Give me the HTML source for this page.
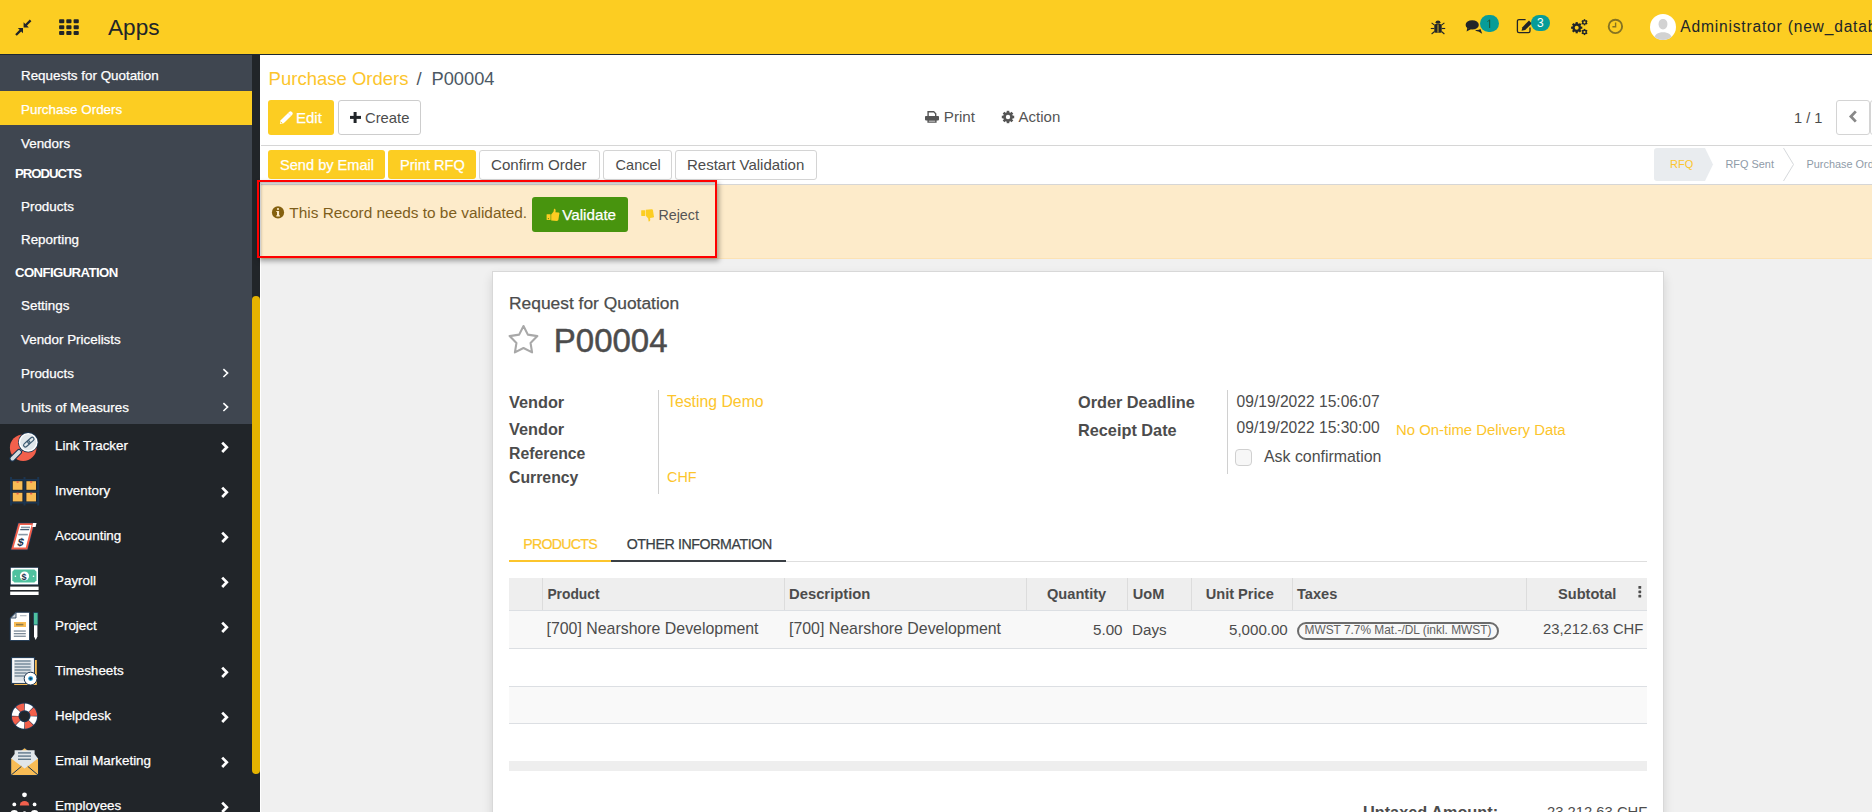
<!DOCTYPE html>
<html><head><meta charset="utf-8"><style>
html,body{margin:0;padding:0;width:1872px;height:812px;overflow:hidden;background:#F0F0F0}
body{position:relative;font-family:"Liberation Sans",sans-serif}
.t{position:absolute;line-height:1;white-space:nowrap;z-index:2}
.r{position:absolute}
svg{position:absolute;overflow:visible}
</style></head><body>
<div class="r" style="left:0px;top:0px;width:1872px;height:54px;background:#FCCD22"></div>
<div class="r" style="left:0px;top:54px;width:1872px;height:1px;background:#1d2833"></div>
<div class="r" style="left:0px;top:55px;width:252px;height:369px;background:#3F4650"></div>
<div class="r" style="left:0px;top:424px;width:252px;height:388px;background:#212529"></div>
<div class="r" style="left:252px;top:55px;width:8px;height:757px;background:#212529"></div>
<div class="r" style="left:252px;top:296px;width:8px;height:478px;background:#E5B300;border-radius:4px"></div>
<div class="r" style="left:260px;top:55px;width:1612px;height:757px;background:#F0F0F0"></div>
<div class="r" style="left:260px;top:55px;width:1612px;height:90px;background:#fff"></div>
<div class="r" style="left:260px;top:145px;width:1612px;height:1px;background:#D6D6D6"></div>
<div class="r" style="left:260px;top:146px;width:1612px;height:38px;background:#fff"></div>
<div class="r" style="left:260px;top:184px;width:1612px;height:1px;background:#D6D6D6"></div>
<div class="r" style="left:260px;top:185px;width:1612px;height:74px;background:#FDEBCA"></div>
<div class="r" style="left:260px;top:258px;width:1612px;height:1px;background:#FCE2B4"></div>
<div class="r" style="left:260px;top:55px;width:1px;height:757px;background:#fff"></div>
<div class="t" style="left:108px;top:16.87px;font-size:22.6px;color:#212529;font-weight:normal;">Apps</div>
<div class="t" style="left:1680.3px;top:19.39px;font-size:15.6px;color:#212529;font-weight:normal;letter-spacing:0.8px">Administrator (new_database)</div>
<div class="r" style="left:0px;top:91px;width:252px;height:34px;background:#FCCD22"></div>
<div class="t" style="left:21px;top:102.66px;font-size:13.4px;color:#fff;font-weight:normal;-webkit-text-stroke-width:0.25px;">Purchase Orders</div>
<div class="t" style="left:21px;top:68.66px;font-size:13.4px;color:#fff;font-weight:normal;-webkit-text-stroke-width:0.25px;">Requests for Quotation</div>
<div class="t" style="left:21px;top:136.66px;font-size:13.4px;color:#fff;font-weight:normal;-webkit-text-stroke-width:0.25px;">Vendors</div>
<div class="t" style="left:21px;top:199.66px;font-size:13.4px;color:#fff;font-weight:normal;-webkit-text-stroke-width:0.25px;">Products</div>
<div class="t" style="left:21px;top:232.66px;font-size:13.4px;color:#fff;font-weight:normal;-webkit-text-stroke-width:0.25px;">Reporting</div>
<div class="t" style="left:21px;top:298.66px;font-size:13.4px;color:#fff;font-weight:normal;-webkit-text-stroke-width:0.25px;">Settings</div>
<div class="t" style="left:21px;top:332.66px;font-size:13.4px;color:#fff;font-weight:normal;-webkit-text-stroke-width:0.25px;">Vendor Pricelists</div>
<div class="t" style="left:21px;top:366.66px;font-size:13.4px;color:#fff;font-weight:normal;-webkit-text-stroke-width:0.25px;">Products</div>
<div class="t" style="left:21px;top:400.66px;font-size:13.4px;color:#fff;font-weight:normal;-webkit-text-stroke-width:0.25px;">Units of Measures</div>
<div class="t" style="left:15px;top:166.83px;font-size:13.2px;color:#fff;font-weight:bold;letter-spacing:-1.0px">PRODUCTS</div>
<div class="t" style="left:15px;top:266.33px;font-size:13.2px;color:#fff;font-weight:bold;letter-spacing:-0.6px">CONFIGURATION</div>
<div class="t" style="left:55px;top:438.66px;font-size:13.4px;color:#fff;font-weight:normal;-webkit-text-stroke-width:0.25px;">Link Tracker</div>
<div class="t" style="left:55px;top:483.66px;font-size:13.4px;color:#fff;font-weight:normal;-webkit-text-stroke-width:0.25px;">Inventory</div>
<div class="t" style="left:55px;top:528.66px;font-size:13.4px;color:#fff;font-weight:normal;-webkit-text-stroke-width:0.25px;">Accounting</div>
<div class="t" style="left:55px;top:573.66px;font-size:13.4px;color:#fff;font-weight:normal;-webkit-text-stroke-width:0.25px;">Payroll</div>
<div class="t" style="left:55px;top:618.66px;font-size:13.4px;color:#fff;font-weight:normal;-webkit-text-stroke-width:0.25px;">Project</div>
<div class="t" style="left:55px;top:663.66px;font-size:13.4px;color:#fff;font-weight:normal;-webkit-text-stroke-width:0.25px;">Timesheets</div>
<div class="t" style="left:55px;top:708.66px;font-size:13.4px;color:#fff;font-weight:normal;-webkit-text-stroke-width:0.25px;">Helpdesk</div>
<div class="t" style="left:55px;top:753.66px;font-size:13.4px;color:#fff;font-weight:normal;-webkit-text-stroke-width:0.25px;">Email Marketing</div>
<div class="t" style="left:55px;top:798.66px;font-size:13.4px;color:#fff;font-weight:normal;-webkit-text-stroke-width:0.25px;">Employees</div>
<div class="t" style="left:268.6px;top:70.24px;font-size:18.5px;color:#FCC52C;font-weight:normal;">Purchase Orders</div>
<div class="t" style="left:416.5px;top:70.24px;font-size:18.5px;color:#4C5864;font-weight:normal;">/</div>
<div class="t" style="left:431.5px;top:70.41px;font-size:18.3px;color:#4C5864;font-weight:normal;">P00004</div>
<div class="r" style="left:268px;top:100px;width:66px;height:35px;background:#FCCD22;border-radius:3px"></div>
<div class="t" style="left:296px;top:110.30px;font-size:15px;color:#fff;font-weight:normal;-webkit-text-stroke-width:0.25px;">Edit</div>
<div class="r" style="left:338px;top:100px;width:83px;height:35px;background:#fff;border:1px solid #CDCDCD;border-radius:3px;box-sizing:border-box"></div>
<div class="t" style="left:365px;top:110.87px;font-size:14.8px;color:#4C4C4C;font-weight:normal;">Create</div>
<div class="t" style="left:943.8px;top:109.13px;font-size:15.2px;color:#555;font-weight:normal;">Print</div>
<div class="t" style="left:1018.6px;top:109.30px;font-size:15px;color:#555;font-weight:normal;">Action</div>
<div class="t" style="left:1794px;top:110.64px;font-size:14.6px;color:#4c4c4c;font-weight:normal;">1 / 1</div>
<div class="r" style="left:1836px;top:100px;width:34px;height:35px;background:#fff;border:1px solid #D4D4D4;border-radius:3px;box-sizing:border-box"></div>
<div class="r" style="left:1870px;top:100px;width:10px;height:35px;background:#fff;border:1px solid #D4D4D4;border-radius:3px;box-sizing:border-box"></div>
<div class="r" style="left:268px;top:150px;width:117px;height:29px;background:#FCCD22;border-radius:3px"></div>
<div class="t" style="left:280px;top:158.14px;font-size:14.6px;color:#fff;font-weight:normal;-webkit-text-stroke-width:0.25px;">Send by Email</div>
<div class="r" style="left:388px;top:150px;width:88px;height:29px;background:#FCCD22;border-radius:3px"></div>
<div class="t" style="left:400px;top:158.14px;font-size:14.6px;color:#fff;font-weight:normal;-webkit-text-stroke-width:0.25px;">Print RFQ</div>
<div class="r" style="left:479px;top:150px;width:121px;height:30px;background:#fff;border:1px solid #D4D4D4;border-radius:3px;box-sizing:border-box"></div>
<div class="t" style="left:491px;top:157.22px;font-size:15.1px;color:#4C4C4C;font-weight:normal;">Confirm Order</div>
<div class="r" style="left:603px;top:150px;width:69px;height:30px;background:#fff;border:1px solid #D4D4D4;border-radius:3px;box-sizing:border-box"></div>
<div class="t" style="left:615.6px;top:158.33px;font-size:14.5px;color:#4C4C4C;font-weight:normal;">Cancel</div>
<div class="r" style="left:675px;top:150px;width:142px;height:30px;background:#fff;border:1px solid #D4D4D4;border-radius:3px;box-sizing:border-box"></div>
<div class="t" style="left:687px;top:157.30px;font-size:15.0px;color:#4C4C4C;font-weight:normal;">Restart Validation</div>
<div class="t" style="left:1670px;top:158.99px;font-size:11.0px;color:#FCC52C;font-weight:normal;">RFQ</div>
<div class="t" style="left:1725.5px;top:159.07px;font-size:10.9px;color:#8F9BA8;font-weight:normal;">RFQ Sent</div>
<div class="t" style="left:1806.5px;top:159.07px;font-size:10.9px;color:#8F9BA8;font-weight:normal;white-space:nowrap">Purchase Order</div>
<div class="t" style="left:289.3px;top:204.56px;font-size:15.4px;color:#7E5E1C;font-weight:normal;">This Record needs to be validated.</div>
<div class="r" style="left:532px;top:197px;width:96px;height:35px;background:#48940E;border-radius:3px"></div>
<div class="t" style="left:562.3px;top:207.13px;font-size:15.2px;color:#fff;font-weight:normal;-webkit-text-stroke-width:0.25px;">Validate</div>
<div class="t" style="left:658.4px;top:208.40px;font-size:14.3px;color:#555;font-weight:normal;">Reject</div>
<div class="r" style="left:259px;top:182px;width:456px;height:74px;box-shadow:inset 3px 3px 3px -1px rgba(0,0,0,0.28)"></div>
<div class="r" style="left:257px;top:180px;width:460px;height:78px;border:2.4px solid #F00;box-sizing:border-box;box-shadow:2px 3px 5px rgba(0,0,0,0.35)"></div>
<div class="r" style="left:492px;top:271px;width:1172px;height:600px;background:#fff;border:1px solid #D8D8D8;box-sizing:border-box;box-shadow:0 5px 10px rgba(0,0,0,0.12)"></div>
<div class="t" style="left:509px;top:295.27px;font-size:17.4px;color:#4C4C4C;font-weight:normal;-webkit-text-stroke:0.25px #4C4C4C">Request for Quotation</div>
<div class="t" style="left:553.8px;top:324.07px;font-size:33px;color:#4C4C4C;font-weight:normal;-webkit-text-stroke:0.5px #4C4C4C">P00004</div>
<div class="t" style="left:509px;top:394.40px;font-size:16.3px;color:#4C4C4C;font-weight:bold;">Vendor</div>
<div class="t" style="left:509px;top:421.20px;font-size:16.3px;color:#4C4C4C;font-weight:bold;">Vendor</div>
<div class="t" style="left:509px;top:446.13px;font-size:15.8px;color:#4C4C4C;font-weight:bold;">Reference</div>
<div class="t" style="left:509px;top:469.63px;font-size:15.8px;color:#4C4C4C;font-weight:bold;">Currency</div>
<div class="r" style="left:658px;top:390px;width:1px;height:104px;background:#D0D0D0"></div>
<div class="t" style="left:667px;top:394.23px;font-size:15.8px;color:#FCC52C;font-weight:normal;">Testing Demo</div>
<div class="t" style="left:667px;top:470.31px;font-size:14.4px;color:#FCC52C;font-weight:normal;">CHF</div>
<div class="t" style="left:1078px;top:394.20px;font-size:16.3px;color:#4C4C4C;font-weight:bold;">Order Deadline</div>
<div class="t" style="left:1078px;top:421.50px;font-size:16.3px;color:#4C4C4C;font-weight:bold;">Receipt Date</div>
<div class="r" style="left:1227px;top:390px;width:1px;height:84px;background:#D0D0D0"></div>
<div class="t" style="left:1236.6px;top:393.79px;font-size:15.6px;color:#4C4C4C;font-weight:normal;">09/19/2022 15:06:07</div>
<div class="t" style="left:1236.6px;top:420.29px;font-size:15.6px;color:#4C4C4C;font-weight:normal;">09/19/2022 15:30:00</div>
<div class="t" style="left:1396px;top:423.39px;font-size:14.9px;color:#FCC52C;font-weight:normal;">No On-time Delivery Data</div>
<div class="r" style="left:1235px;top:449px;width:17px;height:17px;background:#F7F7F7;border:1px solid #D0D0D0;border-radius:4px;box-sizing:border-box"></div>
<div class="t" style="left:1264px;top:448.54px;font-size:15.9px;color:#4C4C4C;font-weight:normal;">Ask confirmation</div>
<div class="r" style="left:509px;top:561px;width:1138px;height:1px;background:#DEDEDE"></div>
<div class="r" style="left:509px;top:560px;width:102px;height:2px;background:#FCC52C"></div>
<div class="r" style="left:611px;top:560px;width:175px;height:2px;background:#3A3F44"></div>
<div class="t" style="left:523.3px;top:537.38px;font-size:14.2px;color:#FCC52C;font-weight:normal;letter-spacing:-0.75px;-webkit-text-stroke:0.2px #FCC52C">PRODUCTS</div>
<div class="t" style="left:626.7px;top:537.38px;font-size:14.2px;color:#3A3F44;font-weight:normal;letter-spacing:-0.4px;-webkit-text-stroke:0.25px #3A3F44">OTHER INFORMATION</div>
<div class="r" style="left:509px;top:578px;width:1138px;height:32px;background:#EEEEEE"></div>
<div class="r" style="left:509px;top:610px;width:1138px;height:1px;background:#DCDFE3"></div>
<div class="r" style="left:509px;top:611px;width:1138px;height:37px;background:#F8F8F8"></div>
<div class="r" style="left:509px;top:648px;width:1138px;height:1px;background:#DCDFE3"></div>
<div class="r" style="left:509px;top:649px;width:1138px;height:37px;background:#fff"></div>
<div class="r" style="left:509px;top:686px;width:1138px;height:1px;background:#DCDFE3"></div>
<div class="r" style="left:509px;top:687px;width:1138px;height:36px;background:#F9F9F9"></div>
<div class="r" style="left:509px;top:723px;width:1138px;height:1px;background:#DCDFE3"></div>
<div class="r" style="left:509px;top:724px;width:1138px;height:37px;background:#fff"></div>
<div class="r" style="left:509px;top:761px;width:1138px;height:10px;background:#EEEEEE"></div>
<div class="r" style="left:542px;top:578px;width:1px;height:32px;background:#DCDCDC"></div>
<div class="r" style="left:784px;top:578px;width:1px;height:32px;background:#DCDCDC"></div>
<div class="r" style="left:1026px;top:578px;width:1px;height:32px;background:#DCDCDC"></div>
<div class="r" style="left:1127px;top:578px;width:1px;height:32px;background:#DCDCDC"></div>
<div class="r" style="left:1191px;top:578px;width:1px;height:32px;background:#DCDCDC"></div>
<div class="r" style="left:1292px;top:578px;width:1px;height:32px;background:#DCDCDC"></div>
<div class="r" style="left:1526px;top:578px;width:1px;height:32px;background:#DCDCDC"></div>
<div class="t" style="left:547.4px;top:587.82px;font-size:13.8px;color:#4C4C4C;font-weight:bold;">Product</div>
<div class="t" style="left:789px;top:586.97px;font-size:14.8px;color:#4C4C4C;font-weight:bold;">Description</div>
<div class="t" style="left:1047px;top:587.14px;font-size:14.6px;color:#4C4C4C;font-weight:bold;">Quantity</div>
<div class="t" style="left:1132.8px;top:587.14px;font-size:14.6px;color:#4C4C4C;font-weight:bold;">UoM</div>
<div class="t" style="left:1205.7px;top:587.14px;font-size:14.6px;color:#4C4C4C;font-weight:bold;">Unit Price</div>
<div class="t" style="left:1297px;top:587.14px;font-size:14.6px;color:#4C4C4C;font-weight:bold;">Taxes</div>
<div class="t" style="left:1558px;top:587.14px;font-size:14.6px;color:#4C4C4C;font-weight:bold;">Subtotal</div>
<div class="t" style="left:546.5px;top:621.24px;font-size:15.9px;color:#4C4C4C;font-weight:normal;">[700] Nearshore Development</div>
<div class="t" style="left:789px;top:621.24px;font-size:15.9px;color:#4C4C4C;font-weight:normal;">[700] Nearshore Development</div>
<div class="t" style="left:1093px;top:621.83px;font-size:15.2px;color:#4C4C4C;font-weight:normal;">5.00</div>
<div class="t" style="left:1132px;top:621.83px;font-size:15.2px;color:#4C4C4C;font-weight:normal;">Days</div>
<div class="t" style="left:1229px;top:621.92px;font-size:15.1px;color:#4C4C4C;font-weight:normal;">5,000.00</div>
<div class="r" style="left:1297px;top:622px;width:202px;height:18px;border:2px solid #6c6c6c;border-radius:9px;box-sizing:border-box"></div>
<div class="t" style="left:1304.5px;top:624.53px;font-size:11.9px;color:#606060;font-weight:normal;white-space:nowrap">MWST 7.7% Mat.-/DL (inkl. MWST)</div>
<div class="t" style="left:1543px;top:622.17px;font-size:14.8px;color:#4C4C4C;font-weight:normal;white-space:nowrap">23,212.63 CHF</div>
<div class="t" style="left:1363px;top:804.20px;font-size:16.3px;color:#4C4C4C;font-weight:bold;">Untaxed Amount:</div>
<div class="t" style="left:1547px;top:805.47px;font-size:14.8px;color:#4C4C4C;font-weight:normal;white-space:nowrap">23,212.63 CHF</div>
<svg style="left:14px;top:19px" width="18" height="18" viewBox="0 0 18 18"><g fill="#212529">
<path d="M1.2 15.2 L5.6 10.8 L3.8 9.0 L9.0 9.0 L9.0 14.2 L7.2 12.4 L2.8 16.8 Z"/>
<path d="M16.8 2.8 L12.4 7.2 L14.2 9.0 L9.0 9.0 L9.0 3.8 L10.8 5.6 L15.2 1.2 Z" transform="translate(0.6,-0.6)"/>
</g></svg>
<svg style="left:59px;top:19px" width="21" height="17" viewBox="0 0 21 17"><g fill="#212529"><rect x="0.1" y="0.2" width="5.2" height="4.0" rx="0.9"/><rect x="0.1" y="6.2" width="5.2" height="4.0" rx="0.9"/><rect x="0.1" y="12.0" width="5.2" height="4.0" rx="0.9"/><rect x="7.3" y="0.2" width="5.2" height="4.0" rx="0.9"/><rect x="7.3" y="6.2" width="5.2" height="4.0" rx="0.9"/><rect x="7.3" y="12.0" width="5.2" height="4.0" rx="0.9"/><rect x="14.6" y="0.2" width="5.2" height="4.0" rx="0.9"/><rect x="14.6" y="6.2" width="5.2" height="4.0" rx="0.9"/><rect x="14.6" y="12.0" width="5.2" height="4.0" rx="0.9"/></g></svg>
<svg style="left:1430px;top:20px" width="16" height="15" viewBox="0 0 16 15"><g fill="#212529" stroke="#212529">
<ellipse cx="8" cy="2.2" rx="2.4" ry="1.6" stroke="none"/>
<rect x="4.3" y="4" width="7.4" height="8.8" rx="1.5" stroke="none"/>
<g stroke-width="1.1" fill="none">
<path d="M4.5 5.2 L1.6 2.8"/><path d="M11.5 5.2 L14.4 2.8"/>
<path d="M4.3 8.5 L0.8 8.5"/><path d="M11.7 8.5 L15.2 8.5"/>
<path d="M4.5 11.5 L1.6 14"/><path d="M11.5 11.5 L14.4 14"/>
</g>
<rect x="7.6" y="4.5" width="0.8" height="8" fill="#FCCD22" stroke="none"/>
</g></svg>
<svg style="left:1464px;top:19px" width="20" height="16" viewBox="0 0 20 16"><g fill="#212529">
<ellipse cx="8.2" cy="5.9" rx="6.6" ry="4.7"/>
<path d="M3.2 9 L2.6 12.4 L6.8 10.2 Z"/>
<path d="M11 10.8 C13 11.2 15 11 16.5 10 L18.2 14.8 L14.5 12.5 C13 12.6 11.8 12 11 10.8 Z"/>
</g></svg>
<div class="r" style="left:1480px;top:14.5px;width:19px;height:17.5px;border-radius:9px;background:#079C98"></div>
<svg style="left:1485px;top:18px" width="8" height="12" viewBox="0 0 8 12"><path d="M4.6 1.8 V10" stroke="#1B5B3A" stroke-width="1.1"/><path d="M4.6 2 L2.4 3.6" stroke="#1B5B3A" stroke-width="0.9"/></svg>
<svg style="left:1516px;top:18px" width="16" height="16" viewBox="0 0 16 16"><g fill="none" stroke="#212529" stroke-width="1.3">
<path d="M9.6 1.6 H3 A1.6 1.6 0 0 0 1.4 3.2 V13 A1.6 1.6 0 0 0 3 14.6 H12.4 A1.6 1.6 0 0 0 14 13 V9.5"/>
</g>
<path d="M5.6 12.8 L6.4 9.2 L13.0 2.6 L15.8 5.4 L9.2 12.0 Z" fill="#212529"/></svg>
<div class="r" style="left:1531px;top:15px;width:19px;height:16px;border-radius:9px;background:#079C98"></div>
<div class="t" style="left:1536.4px;top:16.8px;font-size:12px;color:#fff;width:8px;text-align:center">3</div>
<svg style="left:1570px;top:19px" width="20" height="17" viewBox="0 0 20 17"><g fill="#212529"><rect x="-1.10" y="-5.60" width="2.20" height="5.60" transform="translate(6.7,8.7) rotate(0.0)"/><rect x="-1.10" y="-5.60" width="2.20" height="5.60" transform="translate(6.7,8.7) rotate(45.0)"/><rect x="-1.10" y="-5.60" width="2.20" height="5.60" transform="translate(6.7,8.7) rotate(90.0)"/><rect x="-1.10" y="-5.60" width="2.20" height="5.60" transform="translate(6.7,8.7) rotate(135.0)"/><rect x="-1.10" y="-5.60" width="2.20" height="5.60" transform="translate(6.7,8.7) rotate(180.0)"/><rect x="-1.10" y="-5.60" width="2.20" height="5.60" transform="translate(6.7,8.7) rotate(225.0)"/><rect x="-1.10" y="-5.60" width="2.20" height="5.60" transform="translate(6.7,8.7) rotate(270.0)"/><rect x="-1.10" y="-5.60" width="2.20" height="5.60" transform="translate(6.7,8.7) rotate(315.0)"/><circle cx="6.7" cy="8.7" r="4.37"/><circle cx="6.7" cy="8.7" r="2.00" fill="#FCCD22"/><rect x="-0.75" y="-3.10" width="1.50" height="3.10" transform="translate(14.5,3.3) rotate(0.0)"/><rect x="-0.75" y="-3.10" width="1.50" height="3.10" transform="translate(14.5,3.3) rotate(60.0)"/><rect x="-0.75" y="-3.10" width="1.50" height="3.10" transform="translate(14.5,3.3) rotate(120.0)"/><rect x="-0.75" y="-3.10" width="1.50" height="3.10" transform="translate(14.5,3.3) rotate(180.0)"/><rect x="-0.75" y="-3.10" width="1.50" height="3.10" transform="translate(14.5,3.3) rotate(240.0)"/><rect x="-0.75" y="-3.10" width="1.50" height="3.10" transform="translate(14.5,3.3) rotate(300.0)"/><circle cx="14.5" cy="3.3" r="2.42"/><circle cx="14.5" cy="3.3" r="1.10" fill="#FCCD22"/><rect x="-0.75" y="-3.10" width="1.50" height="3.10" transform="translate(14.5,13.0) rotate(0.0)"/><rect x="-0.75" y="-3.10" width="1.50" height="3.10" transform="translate(14.5,13.0) rotate(60.0)"/><rect x="-0.75" y="-3.10" width="1.50" height="3.10" transform="translate(14.5,13.0) rotate(120.0)"/><rect x="-0.75" y="-3.10" width="1.50" height="3.10" transform="translate(14.5,13.0) rotate(180.0)"/><rect x="-0.75" y="-3.10" width="1.50" height="3.10" transform="translate(14.5,13.0) rotate(240.0)"/><rect x="-0.75" y="-3.10" width="1.50" height="3.10" transform="translate(14.5,13.0) rotate(300.0)"/><circle cx="14.5" cy="13.0" r="2.42"/><circle cx="14.5" cy="13.0" r="1.10" fill="#FCCD22"/></g></svg>
<svg style="left:1607px;top:18px" width="17" height="17" viewBox="0 0 17 17"><g fill="none" stroke="#857322" stroke-width="1.9">
<circle cx="8.4" cy="8.4" r="6.7"/><path d="M8.6 4.6 V8.8 H5.4" stroke-width="1.4"/></g></svg>
<svg style="left:1650px;top:14px" width="26" height="26" viewBox="0 0 26 26"><defs><clipPath id="av"><circle cx="13" cy="13" r="13"/></clipPath></defs>
<circle cx="13" cy="13" r="13" fill="#fff"/>
<g clip-path="url(#av)" fill="#D2D2D2">
<path d="M13 5 C16.2 5 17.6 7.6 17.4 10.6 C17.2 13.4 15.6 15.6 13 15.6 C10.4 15.6 8.8 13.4 8.6 10.6 C8.4 7.6 9.8 5 13 5 Z"/>
<path d="M3.5 26 C4 20.5 8 18.2 13 18.2 C18 18.2 22 20.5 22.5 26 Z"/>
</g></svg>
<svg style="left:279px;top:111px" width="15" height="15" viewBox="0 0 15 15"><path d="M0.9 13.1 L1.7 9.3 L10.1 0.9 A2 2 0 0 1 12.9 0.9 L13.1 1.1 A2 2 0 0 1 13.1 3.9 L4.7 12.3 Z" fill="#fff"/>
<path d="M9.2 1.9 L12.1 4.8" stroke="#FCCD22" stroke-width="0.5" opacity="0.6"/>
<circle cx="2.4" cy="11.6" r="0.7" fill="#FCCD22"/></svg>
<svg style="left:349px;top:111px" width="13" height="13" viewBox="0 0 13 13"><g fill="#212529"><rect x="4.6" y="1" width="3" height="11"/><rect x="1" y="4.9" width="11" height="3"/></g></svg>
<svg style="left:924px;top:110px" width="16" height="14" viewBox="0 0 16 14"><g fill="#555">
<path d="M3.4 1 H10 L12.4 3.4 V6 H11 V3.9 L9.6 2.4 H4.8 V6 H3.4 Z"/>
<rect x="1" y="6" width="14" height="4.4" rx="0.8"/>
<path d="M3.4 9 H12.6 V12.8 H3.4 Z M4.8 10.4 V11.4 H11.2 V10.4 Z" fill-rule="evenodd"/>
</g></svg>
<svg style="left:1001px;top:110px" width="14" height="14" viewBox="0 0 14 14"><g fill="#555"><rect x="-1.30" y="-6.20" width="2.60" height="6.20" transform="translate(7,7) rotate(0.0)"/><rect x="-1.30" y="-6.20" width="2.60" height="6.20" transform="translate(7,7) rotate(45.0)"/><rect x="-1.30" y="-6.20" width="2.60" height="6.20" transform="translate(7,7) rotate(90.0)"/><rect x="-1.30" y="-6.20" width="2.60" height="6.20" transform="translate(7,7) rotate(135.0)"/><rect x="-1.30" y="-6.20" width="2.60" height="6.20" transform="translate(7,7) rotate(180.0)"/><rect x="-1.30" y="-6.20" width="2.60" height="6.20" transform="translate(7,7) rotate(225.0)"/><rect x="-1.30" y="-6.20" width="2.60" height="6.20" transform="translate(7,7) rotate(270.0)"/><rect x="-1.30" y="-6.20" width="2.60" height="6.20" transform="translate(7,7) rotate(315.0)"/><circle cx="7" cy="7" r="4.84"/><circle cx="7" cy="7" r="2.20" fill="#fff"/></g></svg>
<svg style="left:1847px;top:109px" width="12" height="16" viewBox="0 0 12 16"><path d="M8.8 2.4 L3.9 7.5 L8.8 12.6" fill="none" stroke="#888" stroke-width="2.8"/></svg>
<svg style="left:271px;top:206px" width="14" height="14" viewBox="0 0 14 14"><circle cx="7" cy="6.4" r="6.1" fill="#84600F"/>
<g fill="#FDEBCA"><circle cx="7.0" cy="3.0" r="1.1"/><path d="M5.3 4.9 H8.1 V9.3 H8.9 V10.4 H5.3 V9.3 H6.0 V6.0 H5.3 Z"/></g></svg>
<svg style="left:546px;top:208px" width="14" height="14" viewBox="0 0 14 14"><g fill="#FCCD22">
<rect x="0.6" y="6.2" width="4" height="5.8" rx="0.4"/>
<path d="M5.2 6.4 L7.6 3.6 L8 0.8 C9.6 0.6 10 2.2 9.4 4.2 L12.6 4.6 C13.6 4.8 13.6 6 13.2 6.4 L12.4 11.8 C12.2 12.6 11.6 12.9 11 12.9 L5.2 12.4 Z"/>
</g><circle cx="2.4" cy="10.6" r="0.6" fill="#48940E"/></svg>
<svg style="left:641px;top:208px" width="14" height="15" viewBox="0 0 14 15"><g fill="#FCCD22">
<rect x="0.2" y="2.2" width="4" height="5.8" rx="0.4"/>
<path d="M4.8 7.8 L7.2 10.6 L7.6 13.4 C9.2 13.6 9.6 12 9 10 L12.2 9.6 C13.2 9.4 13.2 8.2 12.8 7.8 L12 2.4 C11.8 1.6 11.2 1.3 10.6 1.3 L4.8 1.8 Z"/>
</g></svg>
<svg style="left:508px;top:324px" width="32" height="32" viewBox="0 0 32 32"><polygon points="15.50,2.00 19.85,10.61 29.39,12.09 22.54,18.89 24.08,28.41 15.50,24.00 6.92,28.41 8.46,18.89 1.61,12.09 11.15,10.61" fill="none" stroke="#A8A8A8" stroke-width="2.1" stroke-linejoin="round"/></svg>
<svg style="left:220px;top:368px" width="11" height="12" viewBox="0 0 11 12"><path d="M3.4 1.2 L7.6 5.1 L3.4 9.0" fill="none" stroke="#fff" stroke-width="1.6"/></svg>
<svg style="left:220px;top:402px" width="11" height="12" viewBox="0 0 11 12"><path d="M3.4 1.2 L7.6 5.1 L3.4 9.0" fill="none" stroke="#fff" stroke-width="1.6"/></svg>
<svg style="left:218px;top:440px" width="13" height="14" viewBox="0 0 13 14"><path d="M4.2 2.6 L8.8 7.3 L4.2 12.0" fill="none" stroke="#fff" stroke-width="2.7"/></svg>
<svg style="left:218px;top:485px" width="13" height="14" viewBox="0 0 13 14"><path d="M4.2 2.6 L8.8 7.3 L4.2 12.0" fill="none" stroke="#fff" stroke-width="2.7"/></svg>
<svg style="left:218px;top:530px" width="13" height="14" viewBox="0 0 13 14"><path d="M4.2 2.6 L8.8 7.3 L4.2 12.0" fill="none" stroke="#fff" stroke-width="2.7"/></svg>
<svg style="left:218px;top:575px" width="13" height="14" viewBox="0 0 13 14"><path d="M4.2 2.6 L8.8 7.3 L4.2 12.0" fill="none" stroke="#fff" stroke-width="2.7"/></svg>
<svg style="left:218px;top:620px" width="13" height="14" viewBox="0 0 13 14"><path d="M4.2 2.6 L8.8 7.3 L4.2 12.0" fill="none" stroke="#fff" stroke-width="2.7"/></svg>
<svg style="left:218px;top:665px" width="13" height="14" viewBox="0 0 13 14"><path d="M4.2 2.6 L8.8 7.3 L4.2 12.0" fill="none" stroke="#fff" stroke-width="2.7"/></svg>
<svg style="left:218px;top:710px" width="13" height="14" viewBox="0 0 13 14"><path d="M4.2 2.6 L8.8 7.3 L4.2 12.0" fill="none" stroke="#fff" stroke-width="2.7"/></svg>
<svg style="left:218px;top:755px" width="13" height="14" viewBox="0 0 13 14"><path d="M4.2 2.6 L8.8 7.3 L4.2 12.0" fill="none" stroke="#fff" stroke-width="2.7"/></svg>
<svg style="left:218px;top:800px" width="13" height="14" viewBox="0 0 13 14"><path d="M4.2 2.6 L8.8 7.3 L4.2 12.0" fill="none" stroke="#fff" stroke-width="2.7"/></svg>
<svg style="left:1636px;top:585px" width="8" height="14" viewBox="0 0 8 14"><g fill="#4C4C4C"><rect x="2.4" y="1" width="2.8" height="2.8" rx="0.6"/><rect x="2.4" y="5.4" width="2.8" height="2.8" rx="0.6"/><rect x="2.4" y="9.8" width="2.8" height="2.8" rx="0.6"/></g></svg>
<svg style="left:1650px;top:146px" width="222" height="38" viewBox="0 0 222 38"><path d="M7 2 H55 L63 18.5 L55 35 H7 A3 3 0 0 1 4 32 V5 A3 3 0 0 1 7 2 Z" fill="#E9ECEF"/>
<path d="M133.5 2 L143.5 18.5 L133.5 35" fill="none" stroke="#D6D9DC" stroke-width="1"/></svg>
<svg style="left:5px;top:428px" width="40" height="40" viewBox="0 0 40 40"><circle cx="18.2" cy="19.7" r="13.3" fill="#F2604C"/>
<path d="M17.2 20.8 L13.6 24.4" stroke="#1C3550" stroke-width="3.6"/>
<path d="M17.2 20.8 L13.6 24.4" stroke="#fff" stroke-width="1.6"/>
<path d="M14 24 L7.4 30.6" stroke="#1C3550" stroke-width="6" stroke-linecap="round"/>
<path d="M14 24 L7.4 30.6" stroke="#D5DCE1" stroke-width="3.8" stroke-linecap="round"/>
<circle cx="23.2" cy="14.3" r="10.2" fill="#1C3550"/>
<circle cx="23.2" cy="14.3" r="9.4" fill="#fff"/>
<circle cx="23.2" cy="14.3" r="8.0" fill="#E1E7EB"/>
<g fill="none" stroke="#3B5A72" stroke-width="1.2" transform="rotate(-42 23.8 14.1)"><rect x="17.4" y="12.3" width="7.4" height="3.6" rx="1.8"/><rect x="22.8" y="12.3" width="7.4" height="3.6" rx="1.8"/></g></svg>
<svg style="left:5px;top:473px" width="40" height="40" viewBox="0 0 40 40"><g fill="#1C3550"><rect x="5" y="4" width="2" height="28.5"/><rect x="18.5" y="4" width="2" height="28.5"/><rect x="32.2" y="4" width="2" height="28.5"/><rect x="5" y="6" width="29.2" height="1.8"/><rect x="5" y="17.6" width="29.2" height="1.8"/><rect x="5" y="28.8" width="29.2" height="1.8"/></g><rect x="7.8" y="8.2" width="9.6" height="8.6" fill="#F8BC55"/><rect x="11.6" y="8.2" width="2" height="1.6" fill="#EB5E4B"/><rect x="7.8" y="19.8" width="9.6" height="8.6" fill="#F8BC55"/><rect x="11.6" y="19.8" width="2" height="1.6" fill="#EB5E4B"/><rect x="21.4" y="8.2" width="9.6" height="8.6" fill="#F8BC55"/><rect x="25.2" y="8.2" width="2" height="1.6" fill="#EB5E4B"/><rect x="21.4" y="19.8" width="9.6" height="8.6" fill="#F8BC55"/><rect x="25.2" y="19.8" width="2" height="1.6" fill="#EB5E4B"/></svg>
<svg style="left:5px;top:518px" width="40" height="40" viewBox="0 0 40 40"><path d="M13.5 5.2 H29 L22.4 31.5 H6.2 Z" fill="#1C3550" stroke="#1C3550" stroke-width="1.6"/>
<path d="M13.5 5.2 H29 L22.4 31.5 H6.2 Z" fill="#F2604C"/>
<path d="M15 7 H26.6 L20.8 29.6 H8.6 Z" fill="#fff"/>
<rect x="29.4" y="5" width="3.4" height="4" fill="#fff" transform="skewX(-14)"/>
<g fill="#8A98A6"><rect x="16" y="8.6" width="9" height="1.6"/><rect x="13.4" y="15.8" width="9.4" height="1.6"/></g>
<rect x="15.2" y="11.2" width="9" height="1" fill="#1C3550"/>
<text x="18.6" y="27.6" font-size="11" font-family="Liberation Sans" font-weight="bold" fill="#1C3550" transform="skewX(-14)">$</text></svg>
<svg style="left:5px;top:563px" width="40" height="40" viewBox="0 0 40 40"><rect x="5.2" y="4.2" width="28.4" height="18" fill="#1C3550"/>
<rect x="5.8" y="4.8" width="27.2" height="16.6" fill="#fff"/>
<path d="M9.4 6.6 H29.4 L31.5 8.7 V17.3 L29.4 19.4 H9.4 L7.3 17.3 V8.7 Z" fill="#4FC19F"/>
<circle cx="19.5" cy="13" r="4.6" fill="#fff"/>
<text x="16.6" y="16.6" font-size="9" font-family="Liberation Sans" font-weight="bold" fill="#1C3550">$</text>
<circle cx="10.4" cy="13.2" r="0.8" fill="#fff"/><circle cx="28.5" cy="13.2" r="0.8" fill="#fff"/>
<rect x="5.2" y="23.6" width="28.4" height="3.4" fill="#fff"/>
<rect x="5.2" y="28.6" width="28.4" height="3.4" fill="#fff"/></svg>
<svg style="left:5px;top:608px" width="40" height="40" viewBox="0 0 40 40"><path d="M11 4.2 H24.6 V32.6 H5.2 V10 Z" fill="#fff" stroke="#1C3550" stroke-width="1"/>
<path d="M11 4.6 V10 H5.6 Z" fill="#D4D8DC" stroke="#1C3550" stroke-width="0.8"/>
<rect x="9" y="14" width="12" height="5" fill="#F8BC55"/><rect x="11" y="15.8" width="7.4" height="1.6" fill="#8F7A4A"/>
<g fill="#7C8B99"><rect x="8.8" y="22.4" width="12" height="1.3"/><rect x="8.8" y="25" width="12" height="1.3"/><rect x="8.8" y="27.6" width="12" height="1.3"/></g>
<g fill="#B8C0C8"><rect x="15" y="7" width="6.5" height="1.3"/></g>
<rect x="28.4" y="4.4" width="4.6" height="12.6" fill="#4FC19F" stroke="#1C3550" stroke-width="0.8"/>
<path d="M29 17.2 H32.4 V28.4 L30.7 32 L29 28.4 Z" fill="#fff"/></svg>
<svg style="left:5px;top:653px" width="40" height="40" viewBox="0 0 40 40"><rect x="9.2" y="7" width="22.6" height="25" fill="#F8BC55"/>
<rect x="6.6" y="4.6" width="22.8" height="25.8" fill="#fff" stroke="#1C3550" stroke-width="1"/>
<rect x="8.8" y="7" width="18.8" height="21.4" fill="#DCE2E7"/>
<g fill="#60788A"><rect x="9.6" y="7.4" width="16" height="1.2"/><rect x="9.6" y="10.4" width="16" height="1.2"/><rect x="9.6" y="13.4" width="16" height="1.2"/><rect x="9.6" y="16.4" width="16" height="1.2"/><rect x="9.6" y="19.4" width="12" height="1.2"/><rect x="9.6" y="22.4" width="10" height="1.2"/></g>
<circle cx="25.6" cy="25.6" r="6.4" fill="#fff" stroke="#1C3550" stroke-width="1"/>
<circle cx="25.6" cy="25.6" r="2.4" fill="#1E9BD7"/><circle cx="25.6" cy="25.6" r="1.2" fill="#1C3550"/></svg>
<svg style="left:5px;top:698px" width="40" height="40" viewBox="0 0 40 40"><circle cx="19.5" cy="18.2" r="13.6" fill="#1C3550"/><path d="M19.83 5.60 A12.6 12.6 0 0 1 28.17 9.06 L23.63 13.85 A6.0 6.0 0 0 0 19.66 12.20 Z" fill="#fff"/><path d="M28.64 9.53 A12.6 12.6 0 0 1 32.10 17.87 L25.50 18.04 A6.0 6.0 0 0 0 23.85 14.07 Z" fill="#F2604C"/><path d="M32.10 18.53 A12.6 12.6 0 0 1 28.64 26.87 L23.85 22.33 A6.0 6.0 0 0 0 25.50 18.36 Z" fill="#fff"/><path d="M28.17 27.34 A12.6 12.6 0 0 1 19.83 30.80 L19.66 24.20 A6.0 6.0 0 0 0 23.63 22.55 Z" fill="#F2604C"/><path d="M19.17 30.80 A12.6 12.6 0 0 1 10.83 27.34 L15.37 22.55 A6.0 6.0 0 0 0 19.34 24.20 Z" fill="#fff"/><path d="M10.36 26.87 A12.6 12.6 0 0 1 6.90 18.53 L13.50 18.36 A6.0 6.0 0 0 0 15.15 22.33 Z" fill="#F2604C"/><path d="M6.90 17.87 A12.6 12.6 0 0 1 10.36 9.53 L15.15 14.07 A6.0 6.0 0 0 0 13.50 18.04 Z" fill="#fff"/><path d="M10.83 9.06 A12.6 12.6 0 0 1 19.17 5.60 L19.34 12.20 A6.0 6.0 0 0 0 15.37 13.85 Z" fill="#F2604C"/><circle cx="19.5" cy="18.2" r="4.8" fill="#212529"/></svg>
<svg style="left:5px;top:743px" width="40" height="40" viewBox="0 0 40 40"><path d="M5.5 15.2 L19.6 4.6 L33.5 15.2 V32.6 H5.5 Z" fill="#1C3550"/>
<path d="M6.2 15.6 L19.6 5.2 L33 15.6 V32 H6.2 Z" fill="#F8BC55"/>
<path d="M9.6 11 V7.2 H29.6 V11 L33 15.6 L19.6 25.6 L6.2 15.6 Z" fill="#E1E6EA"/>
<g fill="#60788A"><rect x="13" y="9.2" width="13" height="1.4"/><rect x="13" y="12.4" width="13" height="1.4"/><rect x="13" y="15.6" width="13" height="1.4"/></g>
<path d="M6.2 32 L16.4 23.4 M33 32 L22.8 23.4" stroke="#1C3550" stroke-width="1"/></svg>
<svg style="left:5px;top:788px" width="40" height="30" viewBox="0 0 40 30"><circle cx="19.5" cy="6.8" r="2.4" fill="#fff"/>
<path d="M14.8 17.6 A4.7 4.7 0 0 1 24.2 17.6 Z" fill="#F2604C"/>
<circle cx="9.3" cy="16.4" r="1.9" fill="#fff"/><circle cx="29.6" cy="16.4" r="1.9" fill="#fff"/>
<circle cx="9.3" cy="26" r="4" fill="#fff"/><circle cx="29.6" cy="26" r="4" fill="#fff"/><circle cx="19.5" cy="25" r="1.8" fill="#fff"/></svg>
</body></html>
